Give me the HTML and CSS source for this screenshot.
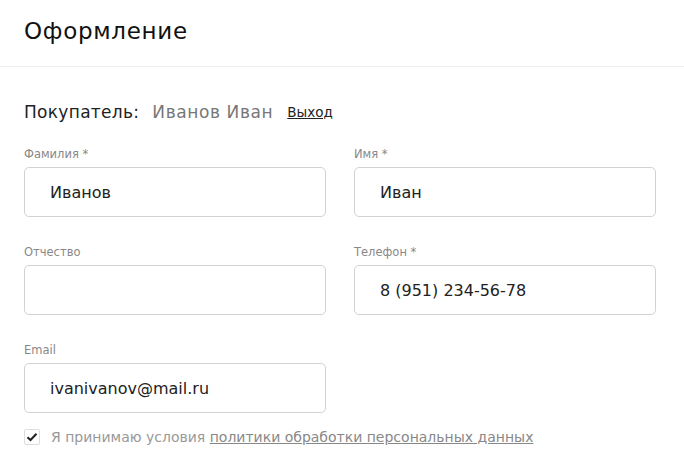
FILE: index.html
```html
<!DOCTYPE html>
<html>
    <head>
        <meta charset="utf-8">
        <title>Оформление</title>
        <link rel="stylesheet" href="styles.css">
    </head>
    <body>
        <div class="header">
            <h1>Оформление</h1>
        </div>
        <div class="content">
            <div class="buyer">
                <span class="buyer-label">Покупатель:</span>
                <span class="buyer-name">Иванов Иван</span>
                <a href="#" class="logout">Выход</a>
            </div>
            <div class="fields">
                <div class="field">
                    <label>Фамилия *</label>
                    <div class="input">Иванов</div>
                </div>
                <div class="field">
                    <label>Имя *</label>
                    <div class="input">Иван</div>
                </div>
                <div class="field">
                    <label>Отчество</label>
                    <div class="input"></div>
                </div>
                <div class="field">
                    <label>Телефон *</label>
                    <div class="input">8 (951) 234-56-78</div>
                </div>
                <div class="field">
                    <label>Email</label>
                    <div class="input">ivanivanov@mail.ru</div>
                </div>
            </div>
            <div class="agree">
                <span class="check">
                    <svg width="12" height="10" viewBox="0 0 12 10"><path d="M1.5 5.2 L4.5 8 L10.5 1.8" fill="none" stroke="#222" stroke-width="2"/></svg>
                </span>
                <span>Я принимаю условия <a href="#">политики обработки персональных данных</a></span>
            </div>
        </div>
    </body>
</html>
```

FILE: styles.css
```css
body {
    margin: 0;
    font-family: "DejaVu Sans", sans-serif;
    color: #222;
    background: #fff;
}
.header {
    height: 46px;
    padding: 20px 24px 0;
    border-bottom: 1px solid #efefef;
}
h1 {
    margin: 0;
    font-size: 23px;
    line-height: 23px;
    font-weight: 400;
    color: #111;
    letter-spacing: 0.7px;
}
.content {
    padding: 0 28px 0 24px;
}
.buyer {
    margin-top: 34px;
    height: 22px;
    display: flex;
    align-items: center;
    font-size: 17px;
}
.buyer-label {
    color: #222;
    letter-spacing: 0.3px;
}
.buyer-name {
    color: #777;
    margin-left: 13px;
    letter-spacing: 0.6px;
}
.logout {
    margin-left: 14px;
    font-size: 13.5px;
    color: #222;
}
.fields {
    margin-top: 24px;
    display: grid;
    grid-template-columns: 302px 302px;
    column-gap: 28px;
    row-gap: 28px;
}
.field label {
    display: block;
    font-size: 11.5px;
    color: #888;
    height: 20px;
}
.input {
    height: 48px;
    border: 1px solid #d2d2d2;
    border-radius: 5px;
    padding-left: 25px;
    font-size: 16px;
    display: flex;
    align-items: center;
    color: #222;
}
.agree {
    margin-top: 16px;
    display: flex;
    align-items: center;
    font-size: 14px;
    color: #999;
}
.check {
    width: 14px;
    height: 14px;
    border: 1px solid #ddd;
    border-radius: 2px;
    display: flex;
    align-items: center;
    justify-content: center;
    margin-right: 11px;
}
.agree a {
    color: #888;
}
```
